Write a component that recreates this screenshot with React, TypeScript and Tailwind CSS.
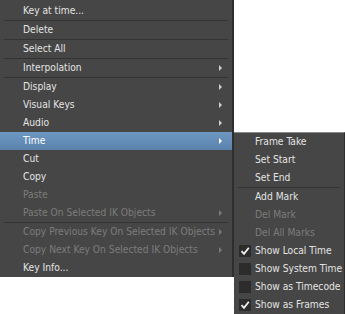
import React from "react";

type Item =
  | { sep: true }
  | { label: string; sub?: boolean; off?: boolean; hot?: boolean; check?: boolean };

const mainItems: Item[] = [
  { label: "Key at time..." },
  { sep: true },
  { label: "Delete" },
  { sep: true },
  { label: "Select All" },
  { sep: true },
  { label: "Interpolation", sub: true },
  { sep: true },
  { label: "Display", sub: true },
  { label: "Visual Keys", sub: true },
  { label: "Audio", sub: true },
  { label: "Time", sub: true, hot: true },
  { label: "Cut" },
  { label: "Copy" },
  { label: "Paste", off: true },
  { label: "Paste On Selected IK Objects", sub: true, off: true },
  { sep: true },
  { label: "Copy Previous Key On Selected IK Objects", sub: true, off: true },
  { label: "Copy Next Key On Selected IK Objects", sub: true, off: true },
  { label: "Key Info..." },
];

const timeItems: Item[] = [
  { label: "Frame Take" },
  { label: "Set Start" },
  { label: "Set End" },
  { sep: true },
  { label: "Add Mark" },
  { label: "Del Mark", off: true },
  { label: "Del All Marks", off: true },
  { label: "Show Local Time", check: true },
  { label: "Show System Time", check: false },
  { label: "Show as Timecode", check: false },
  { label: "Show as Frames", check: true },
];

const Arrow = ({ off, hot }: { off?: boolean; hot?: boolean }) => (
  <span
    className={
      "absolute right-[10px] top-[6px] h-0 w-0 border-y-[3px] border-l-[3px] border-y-transparent " +
      (hot ? "border-l-white" : off ? "border-l-[#7a7a7a]" : "border-l-[#cfcfcf]")
    }
  />
);

const Check = ({ on }: { on: boolean }) => (
  <span className="absolute left-[5px] top-[3px] flex h-[12px] w-[12px] items-center justify-center bg-[#2c2c2c]">
    {on && (
      <svg width="10" height="10" viewBox="0 0 10 10">
        <path d="M1.5 5.2 L4 7.8 L8.8 1.8" fill="none" stroke="#f2f2f2" strokeWidth="1.8" />
      </svg>
    )}
  </span>
);

const MenuRows = ({ items, indent }: { items: Item[]; indent: string }) => (
  <>
    {items.map((it, i) =>
      "sep" in it ? (
        <div key={i} className="mx-[4px] h-px bg-[#333333]" />
      ) : (
        <div
          key={i}
          className={
            "relative flex h-[18px] items-center whitespace-nowrap " +
            indent +
            (it.hot
              ? " bg-gradient-to-b from-[#6e97c2] to-[#5a82ad] text-white"
              : it.off
              ? " text-[#7c7c7c]"
              : " text-[#e4e4e4]")
          }
        >
          {it.check !== undefined && <Check on={it.check} />}
          {it.label}
          {it.sub && <Arrow off={it.off} hot={it.hot} />}
        </div>
      )
    )}
  </>
);

export default function App() {
  return (
    <div
      className="flex h-[314px] w-[345px] items-start overflow-hidden bg-white text-[10.2px]"
      style={{ fontFamily: "'DejaVu Sans Condensed', 'Liberation Sans', sans-serif" }}
    >
      <div className="w-[234px] shrink-0 border-r-2 border-r-[#2e2e2e] bg-[#464646] pt-[2px]">
        <MenuRows items={mainItems} indent="pl-[23px]" />
      </div>
      <div className="mt-[132px] w-[111px] shrink-0 border-t border-t-[#8a8a8a] border-r border-r-[#2e2e2e] bg-[#464646]">
        <MenuRows items={timeItems} indent="pl-[21px]" />
      </div>
    </div>
  );
}
